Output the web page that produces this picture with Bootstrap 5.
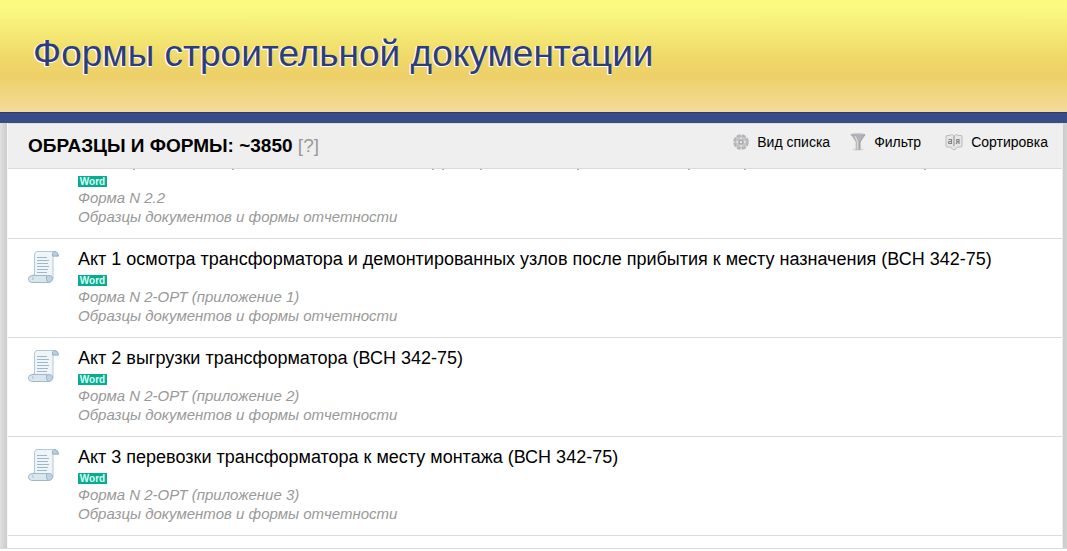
<!DOCTYPE html>
<html lang="ru">
<head>
<meta charset="utf-8">
<meta name="viewport" content="width=device-width, initial-scale=1">
<title>Формы строительной документации</title>
<link rel="stylesheet" href="https://cdn.jsdelivr.net/npm/bootstrap@5.3.0/dist/css/bootstrap.min.css">
<style>
body { font-family: "Liberation Sans", Arial, sans-serif; color: #000; background: #fff; }
a { color: inherit; text-decoration: none; }
.site-head { height: 112px; padding: 0 33px 4px; background: linear-gradient(#fcfb80 0, #fafa82 8px, #f0d868 58px, #edd068 76px, #f3db9b 112px); }
.site-title { font-size: 37px; line-height: 48px; color: #2c3c7c; text-shadow: -1px 1px 0 #fff, -1px 0 0 #fff, 0 1px 0 #fff; }
.stripe { height: 11px; background: #3a4c86; border-top: 1px solid #2d3c76; }
.backdrop { background: linear-gradient(90deg, #e0e0e0 0, #cbcbcb 7px, #cbcbcb calc(100% - 4px), #d4d4d4 100%); padding: 0 4px 0 7px; border-bottom: 1px solid #dadada; margin-bottom: 2px; }
.panel { background: #fff; border-left: 1px solid #f8f8f8; border-right: 1px solid #eee; }
.tools { height: 46px; padding: 0 14px 0 20px; background: #efefef; border-top: 1px solid #ddd; border-bottom: 1px solid #dbdbdb; }
.tools-title { font-size: 19px; line-height: 20px; }
.hint { color: #999; font-weight: 400; }
.tool { font-size: 14px; line-height: 18px; padding: 0 0 8px; border: 0; background: none; color: #000; }
.doc-row { padding: 10px 20px 12px; border-bottom: 1px solid #dbdbdb; }
.doc-row.cut { padding-top: 6px; }
.doc-icon { width: 32px; height: 34px; margin-right: 18px; }
.doc-title { font-size: 18px; line-height: 20px; margin-bottom: 6px; }
.word-tag { width: 29px; height: 11px; margin-bottom: 1px; background: #0aab90; color: #d5fff4; font-size: 10px; line-height: 11px; font-weight: 700; text-align: center; }
.meta { font-size: 15px; line-height: 19px; color: #999; font-style: italic; }
.tails { height: 1px; width: 100%; }
</style>
</head>
<body class="d-flex flex-column vh-100 overflow-hidden">
<svg class="d-none" aria-hidden="true">
  <symbol id="scroll" viewBox="0 0 32 34">
    <path d="M9 2.500H27Q30 3 30.500 7H25V30Q24 33 20 33.500H5V26H6.500V6Q6.500 3 9 2.500Z" fill="#eef4f8" stroke="#b4c9d8"/>
    <path d="M24.500 7Q24 2.500 27 2.500Q30 3 30.500 7Z" fill="#b9d0df" stroke="#94b0c6"/>
    <path d="M3.500 26.500H19Q17.500 30 20 33.500H3.500Q.5 33 .5 30T3.500 26.500Z" fill="#d9e6ee" stroke="#9fb9cc"/>
    <path d="M18.500 27Q24 25.500 24.500 29Q24 33.500 20.500 33.500Q17.500 31 18.500 27Z" fill="#bfd4e2" stroke="#9bb6ca"/>
    <path d="M3.500 27.500Q5.500 28 5 31" fill="none" stroke="#a9c1d1"/>
    <path d="M9 8.500H19M9 11.500H21M9 14.500H20M9 17.500H21M9 20.500H20M9 23.500H19" stroke="#9db7cc"/>
  </symbol>
</svg>
<header class="site-head d-flex align-items-center"><h1 class="site-title m-0 fw-normal">Формы строительной документации</h1></header>
<div class="stripe flex-shrink-0"></div>
<div class="backdrop flex-grow-1 overflow-hidden">
<main class="panel h-100">
  <div class="tools d-flex align-items-center justify-content-between">
    <h2 class="tools-title m-0 fw-bold">ОБРАЗЦЫ И ФОРМЫ: ~3850 <a href="#" class="hint">[?]</a></h2>
    <div class="d-flex">
      <button type="button" class="tool d-flex align-items-center gap-2 me-3"><svg width="16" height="16" viewBox="0 0 16 16"><circle cx="8" cy="8" r="6.500" fill="#c4c4c6" stroke="#b4b4b6" stroke-width="2.600" stroke-dasharray="3.900 1.205"/><circle cx="8" cy="8" r="5.600" fill="#c6c6c9"/><g fill="#e9e9eb"><circle cx="8" cy="4.300" r=".9"/><circle cx="8" cy="11.700" r=".9"/><circle cx="4.300" cy="8" r=".9"/><circle cx="11.700" cy="8" r=".9"/></g><circle cx="8" cy="8" r="2.600" fill="#a6a6a8"/><circle cx="8" cy="8" r="1.300" fill="#e3e3e5"/></svg>Вид списка</button>
      <button type="button" class="tool d-flex align-items-center gap-2 ms-1 me-4"><svg width="16" height="18" viewBox="0 0 16 18"><ellipse cx="8" cy="16.500" rx="5.500" ry="1" fill="#d4d4d4"/><path d="M.8 1.500H15.200L10.300 9V16.800H5.700V9Z" fill="#b3b3b9"/><path d="M5 3L7.500 8.500V16" fill="none" stroke="#d6d6dd" stroke-width="1.400"/><path d="M14.800 2L9.900 9V16.500" fill="none" stroke="#96969b" stroke-width=".8"/><ellipse cx="8" cy="1.800" rx="7.200" ry="1" fill="#bdbdc4" stroke="#a0a0a5" stroke-width=".6"/></svg>Фильтр</button>
      <button type="button" class="tool d-flex align-items-center gap-2"><svg width="18" height="18" viewBox="0 0 18 18"><path d="M8.500 2.500L6.500 1.500L5 2.500H2Q1 2.500 1 4V13Q1 14 2 14H5L9 17L13 14H16Q17 14 17 13V4Q17 2.500 16 2.500H13L11.500 1.500L9.500 2.500V13H8.500Z" fill="#e6e6e6" stroke="#bababa"/><g fill="none" stroke="#858585" stroke-width="1.200"><path d="M3.500 6.500H6.500V11M6.500 8.500H4Q3 9.700 4 10.500H6.500"/><path d="M14 11V6.500H12Q11 7.500 12 8.700H14M12.500 8.700L11 11"/></g></svg>Сортировка</button>
    </div>
  </div>
  <section aria-label="Список форм">
    <svg class="tails d-block" aria-hidden="true"><path d="M125 .5h2M224 .5h2M424 .5h2M434 .5h2M472 .5h2M569 .5h2M680 .5h2M736 .5h2M916 .5h2" stroke="#aaa"/></svg>
    <article class="doc-row cut d-flex"><div class="doc-icon flex-shrink-0"></div><div><div class="word-tag">Word</div><div class="meta">Форма N 2.2</div><div class="meta">Образцы документов и формы отчетности</div></div></article>
    <article class="doc-row d-flex"><svg class="doc-icon flex-shrink-0"><use href="#scroll"/></svg><div><a href="#" class="doc-title d-block">Акт 1 осмотра трансформатора и демонтированных узлов после прибытия к месту назначения (ВСН 342-75)</a><div class="word-tag">Word</div><div class="meta">Форма N 2-ОРТ (приложение 1)</div><div class="meta">Образцы документов и формы отчетности</div></div></article>
    <article class="doc-row d-flex"><svg class="doc-icon flex-shrink-0"><use href="#scroll"/></svg><div><a href="#" class="doc-title d-block">Акт 2 выгрузки трансформатора (ВСН 342-75)</a><div class="word-tag">Word</div><div class="meta">Форма N 2-ОРТ (приложение 2)</div><div class="meta">Образцы документов и формы отчетности</div></div></article>
    <article class="doc-row d-flex"><svg class="doc-icon flex-shrink-0"><use href="#scroll"/></svg><div><a href="#" class="doc-title d-block">Акт 3 перевозки трансформатора к месту монтажа (ВСН 342-75)</a><div class="word-tag">Word</div><div class="meta">Форма N 2-ОРТ (приложение 3)</div><div class="meta">Образцы документов и формы отчетности</div></div></article>
  </section>
</main>
</div>
<script src="https://cdn.jsdelivr.net/npm/bootstrap@5.3.0/dist/js/bootstrap.bundle.min.js"></script>
</body>
</html>
